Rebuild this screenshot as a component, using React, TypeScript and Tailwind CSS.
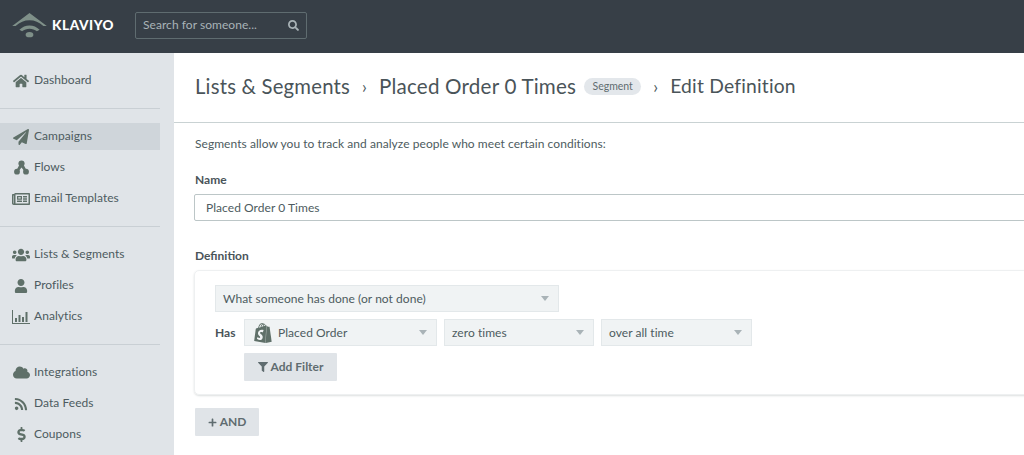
import type { ReactNode } from "react";
import { FaCloud, FaDollarSign, FaFilter, FaHome, FaPaperPlane, FaPlus, FaRegNewspaper, FaRss, FaSearch, FaUser, FaUsers } from "react-icons/fa";
import { SiShopify } from "react-icons/si";

function FlowsIcon() {
  return (
    <svg viewBox="0 0 16 16" className="w-[15px] h-[15px]" fill="currentColor">
      <path d="M6.400 4 2.600 11l1.900 1.400L8 8l3.500 4.400 1.900-1.400L9.600 4z" />
      <circle cx="8" cy="3.800" r="3.300" />
      <circle cx="3.200" cy="12.400" r="3.100" />
      <circle cx="12.800" cy="12.400" r="3.100" />
    </svg>
  );
}

function ChartIcon() {
  return (
    <svg viewBox="0 0 18 14" className="w-[18px] h-[14px]" fill="currentColor">
      <path d="M0 0h1v13h17v1H0z" />
      <path d="M3 8h2v4H3zM6.500 5h2v7h-2zM10 7h2v5h-2zM13.500 2h2v10h-2z" />
    </svg>
  );
}

function Logo() {
  return (
    <svg viewBox="0 0 36 26" className="w-[35px] h-[25px] text-[#7f9089]" fill="currentColor">
      <path d="M0 13.500 18 0l18 13.500h-3.600C28 9.600 23.400 7.500 18 7.500S8 9.600 3.600 13.500z" />
      <path d="M7.500 17.500C10.500 14.600 14 13 18 13s7.500 1.600 10.500 4.500l-2.800 1.500C23.500 17.200 21 16.300 18 16.300s-5.500.9-7.700 2.700z" />
      <ellipse cx="18" cy="22.500" rx="4" ry="2.800" />
    </svg>
  );
}

function NavItem({ icon, label, active }: { icon: ReactNode; label: string; active?: boolean }) {
  return (
    <div className={`h-[27px] w-[160px] flex items-center pl-3 text-[12px] tracking-[0.05px] text-[#4d5b60] ${active ? "bg-[#cfd5da]" : ""}`}>
      <span className="w-[18px] flex justify-center text-[#5f7069]">{icon}</span>
      <span className="ml-[4px] pb-[2px]">{label}</span>
    </div>
  );
}

function Select({ width, label, icon }: { width: string; label: string; icon?: ReactNode }) {
  return (
    <div className={`${width} h-[27px] flex items-center bg-[#f0f3f4] border border-[#e3e8ea] pl-[7px] pr-[9px] text-[12px] tracking-[0.05px] text-[#4d5b60]`}>
      {icon}
      <span className="flex-1">{label}</span>
      <span className="w-0 h-0 border-x-[4px] border-x-transparent border-t-[5px] border-t-[#a9b3b7]" />
    </div>
  );
}

function Chevron() {
  return <span className="w-[29px] text-center text-[17px] text-[#4d5b60]">›</span>;
}

export default function App() {
  return (
    <div className="h-[455px] w-[1024px] overflow-hidden bg-white font-['Lato','Liberation_Sans',sans-serif] flex flex-col">
      <header className="h-[53px] shrink-0 bg-[#373f47] flex items-center pl-3 pb-[3px]">
        <Logo />
        <span className="ml-[5px] w-[83px] text-[13.500px] font-black tracking-[0.6px] text-white">KLAVIYO</span>
        <div className="w-[172px] h-[27px] flex items-center justify-between border border-[#5f6c70] rounded-[2px] pl-[7px] pr-[7px] text-[12px] tracking-[0.05px] text-[#a9b3b7]">
          <span>Search for someone...</span>
          <FaSearch className="text-[11px]" />
        </div>
      </header>
      <div className="flex flex-1 min-h-0">
        <aside className="w-[174px] shrink-0 bg-[#e0e4e8]">
          <div className="pt-[14px] pb-[14px]">
            <NavItem icon={<FaHome className="text-[16px]" />} label="Dashboard" />
          </div>
          <div className="w-[160px] h-[1px] bg-[#c9cfd4]" />
          <div className="pt-[14px] pb-[14px] flex flex-col gap-[4px]">
            <NavItem icon={<FaPaperPlane className="text-[16px]" />} label="Campaigns" active />
            <NavItem icon={<FlowsIcon />} label="Flows" />
            <NavItem icon={<FaRegNewspaper className="text-[18px]" />} label="Email Templates" />
          </div>
          <div className="w-[160px] h-[1px] bg-[#c9cfd4]" />
          <div className="pt-[14px] pb-[14px] flex flex-col gap-[4px]">
            <NavItem icon={<FaUsers className="text-[18px]" />} label="Lists & Segments" />
            <NavItem icon={<FaUser className="text-[14px]" />} label="Profiles" />
            <NavItem icon={<ChartIcon />} label="Analytics" />
          </div>
          <div className="w-[160px] h-[1px] bg-[#c9cfd4]" />
          <div className="pt-[14px] flex flex-col gap-[4px]">
            <NavItem icon={<FaCloud className="text-[17px]" />} label="Integrations" />
            <NavItem icon={<FaRss className="text-[14px]" />} label="Data Feeds" />
            <NavItem icon={<FaDollarSign className="text-[15px]" />} label="Coupons" />
          </div>
        </aside>
        <main className="flex-1 min-w-0 overflow-hidden">
          <div className="h-[70px] border-b border-[#c9d2d3] flex items-center pl-[21px] pb-[2px] text-[20.300px] tracking-[0.2px] text-[#4a5459] whitespace-nowrap">
            <span>Lists &amp; Segments</span>
            <Chevron />
            <span className="text-[20.600px]">Placed Order 0 Times</span>
            <span className="ml-2 h-[17px] w-[57px] flex items-center justify-center rounded-full bg-[#e3e7eb] text-[10.500px] tracking-normal text-[#5f6c70]">Segment</span>
            <Chevron />
            <span className="text-[19.300px]">Edit Definition</span>
          </div>
          <div className="pl-[20px] w-[900px]">
            <p className="mt-[12px] pl-[1px] text-[12px] tracking-[0.05px] leading-[18px] text-[#4d5b60]">Segments allow you to track and analyze people who meet certain conditions:</p>
            <p className="mt-[18px] pl-[1px] text-[12px] leading-[18px] font-bold text-[#4a5459]">Name</p>
            <div className="mt-[5px] h-[27px] flex items-center border border-[#bcc6c7] rounded-[2px] pl-[11px] text-[12px] tracking-[0.05px] text-[#4d5b60]">Placed Order 0 Times</div>
            <p className="mt-[26px] pl-[1px] text-[12px] leading-[18px] font-bold text-[#4a5459]">Definition</p>
            <div className="mt-[5px] h-[125px] border border-[#eef0f1] rounded-[5px] shadow-[0_1px_2px_rgba(60,75,80,0.18)] pt-[14px] pl-[20px] flex flex-col">
              <Select width="w-[344px]" label="What someone has done (or not done)" />
              <div className="mt-[7px] flex items-center">
                <span className="w-[29px] text-[12px] font-bold text-[#4a5459]">Has</span>
                <div className="flex gap-[7px]">
                  <Select width="w-[193px]" label="Placed Order" icon={<SiShopify className="mr-[5px] ml-[1px] text-[20px] text-[#5f7069]" />} />
                  <Select width="w-[150px]" label="zero times" />
                  <Select width="w-[151px]" label="over all time" />
                </div>
              </div>
              <button className="mt-[7px] ml-[29px] w-[93px] h-[28px] flex items-center justify-center gap-[3px] bg-[#e0e4e8] rounded-[1px] text-[12px] font-bold text-[#5f6c70]">
                <FaFilter className="text-[10px]" />
                Add Filter
              </button>
            </div>
            <button className="mt-[13px] ml-[1px] w-[64px] h-[28px] flex items-center justify-center gap-[3px] bg-[#e0e4e8] rounded-[1px] text-[12px] font-bold text-[#5f6c70]">
              <FaPlus className="text-[9px]" />
              AND
            </button>
          </div>
        </main>
      </div>
    </div>
  );
}
